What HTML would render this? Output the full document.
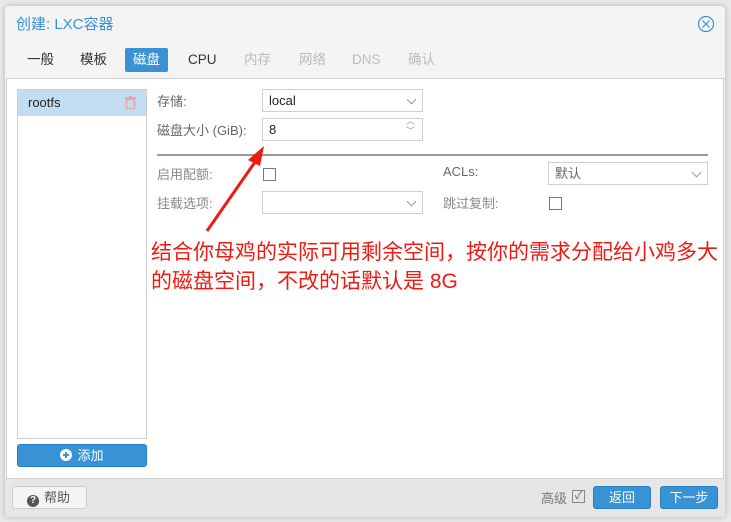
<!DOCTYPE html>
<html><head><meta charset="utf-8"><style>
*{box-sizing:border-box;margin:0;padding:0}
body{width:731px;height:522px;background:#e9e9e9;font-family:"Liberation Sans","Noto Sans CJK SC",sans-serif;font-size:13px;color:#222;position:relative;overflow:hidden}
.win{position:absolute;left:5px;top:6px;width:720px;height:511px;background:#f4f4f4;border-radius:4px;box-shadow:0 0 6px rgba(0,0,0,.25)}
.a{position:absolute;white-space:nowrap}
.title{left:11px;top:7px;font-size:15px;color:#3892d4}
.tab{top:42px;height:24px;line-height:24px;font-size:13.5px;padding:0 8px;color:#333}
.dis{color:#bbb}
.body{position:absolute;left:6px;top:78px;width:718px;height:401px;background:#fff;border:1px solid #cfcfcf}
.lbl{color:#666}
.inp{position:absolute;border:1px solid #cfcfcf;background:#fff;height:23px;line-height:21px;padding-left:6px}
.dd:after{content:"";position:absolute;right:7px;top:6px;width:6px;height:6px;border-right:1px solid #999;border-bottom:1px solid #999;transform:rotate(45deg)}
.cb{position:absolute;width:13px;height:13px;border:1px solid #777;background:#fff}
.btn{position:absolute;background:#3892d4;color:#fff;border:1px solid #2a7fc0;border-radius:3px;text-align:center;line-height:21px;height:23px}
.foot{position:absolute;left:0;top:473px;width:720px;height:38px;background:#e6e6e6;border-radius:0 0 4px 4px}
</style></head><body>
<div class="win">
<div class="a title">创建: LXC容器</div>
<svg class="a" style="left:692px;top:9px" width="18" height="18" viewBox="0 0 18 18"><circle cx="9" cy="9" r="7.5" fill="none" stroke="#3892d4" stroke-width="1.2"/><path d="M5.5 5.5L12.5 12.5M12.5 5.5L5.5 12.5" stroke="#3892d4" stroke-width="1.2"/></svg>
<div class="a tab" style="left:14px">一般</div>
<div class="a tab" style="left:67px">模板</div>
<div class="a tab" style="left:120px;background:#3892d4;color:#fff;border-radius:2px">磁盘</div>
<div class="a tab" style="left:175px">CPU</div>
<div class="a tab dis" style="left:231px">内存</div>
<div class="a tab dis" style="left:286px">网络</div>
<div class="a tab dis" style="left:339px">DNS</div>
<div class="a tab dis" style="left:395px">确认</div>
</div>
<div class="body"></div>
<div class="a" style="left:17px;top:89px;width:130px;height:350px;border:1px solid #cfcfcf;background:#fff"></div>
<div class="a" style="left:18px;top:90px;width:128px;height:26px;background:#c2ddf2;line-height:26px;padding-left:10px">rootfs</div>
<svg class="a" style="left:125px;top:96px" width="11" height="13" viewBox="0 0 11 13"><rect x="0" y="1" width="11" height="2" fill="#e9a6a6"/><rect x="4" y="0" width="3" height="2" fill="#e9a6a6"/><rect x="1.5" y="3.5" width="8" height="9" fill="none" stroke="#e9a6a6" stroke-width="1.5"/></svg>
<div class="btn" style="left:17px;top:444px;width:130px"><svg width="12" height="12" viewBox="0 0 12 12" style="vertical-align:-1px;margin-right:5px"><circle cx="6" cy="6" r="6" fill="#fff"/><path d="M6 3v6M3 6h6" stroke="#3892d4" stroke-width="2"/></svg>添加</div>
<div class="a lbl" style="left:157px;top:91px">存储:</div>
<div class="inp dd" style="left:262px;top:89px;width:161px">local</div>
<div class="a lbl" style="left:157px;top:120px">磁盘大小 (GiB):</div>
<div class="inp" style="left:262px;top:118px;width:161px">8<span style="position:absolute;right:7px;top:-3px;color:#999;font-size:9px;line-height:10px">︿<br>﹀</span></div>
<div class="a" style="left:157px;top:154px;width:551px;height:2px;background:#999"></div>
<div class="a lbl" style="left:157px;top:164px;color:#888">启用配额:</div>
<div class="cb" style="left:263px;top:168px"></div>
<div class="a lbl" style="left:443px;top:164px">ACLs:</div>
<div class="inp dd" style="left:548px;top:162px;width:160px;color:#666">默认</div>
<div class="a lbl" style="left:157px;top:193px;color:#888">挂载选项:</div>
<div class="inp dd" style="left:262px;top:191px;width:161px"></div>
<div class="a lbl" style="left:443px;top:193px;color:#888">跳过复制:</div>
<div class="cb" style="left:549px;top:197px"></div>
<div class="a" style="left:151px;top:238px;font-size:21px;line-height:29px;color:#f01a12">结合你母鸡的实际可用剩余空间，按你的需求分配给小鸡多大<br>的磁盘空间，不改的话默认是 8G</div>
<svg class="a" style="left:0;top:0" width="731" height="300"><path d="M207 231L255 162" stroke="#f01a12" stroke-width="3"/><path d="M264 146L248 160L260 166Z" fill="#f01a12"/></svg>
<div class="foot" style="left:5px;top:479px"></div>
<div class="a" style="left:12px;top:486px;width:75px;height:23px;border:1px solid #ccc;background:#f4f4f4;border-radius:3px;line-height:21px;padding-left:14px;color:#555"><span style="display:inline-block;width:12px;height:12px;border-radius:6px;background:#555;color:#fff;font-size:10px;line-height:12px;text-align:center;font-weight:bold;vertical-align:-1px;margin-right:5px">?</span>帮助</div>
<div class="a" style="left:541px;top:488px;color:#777">高级</div>
<div class="a" style="left:572px;top:490px;width:13px;height:13px;border:1px solid #888;font-size:11px;line-height:11px;color:#666;text-align:center">✓</div>
<div class="btn" style="left:593px;top:486px;width:58px">返回</div>
<div class="btn" style="left:660px;top:486px;width:58px">下一步</div>
</body></html>
